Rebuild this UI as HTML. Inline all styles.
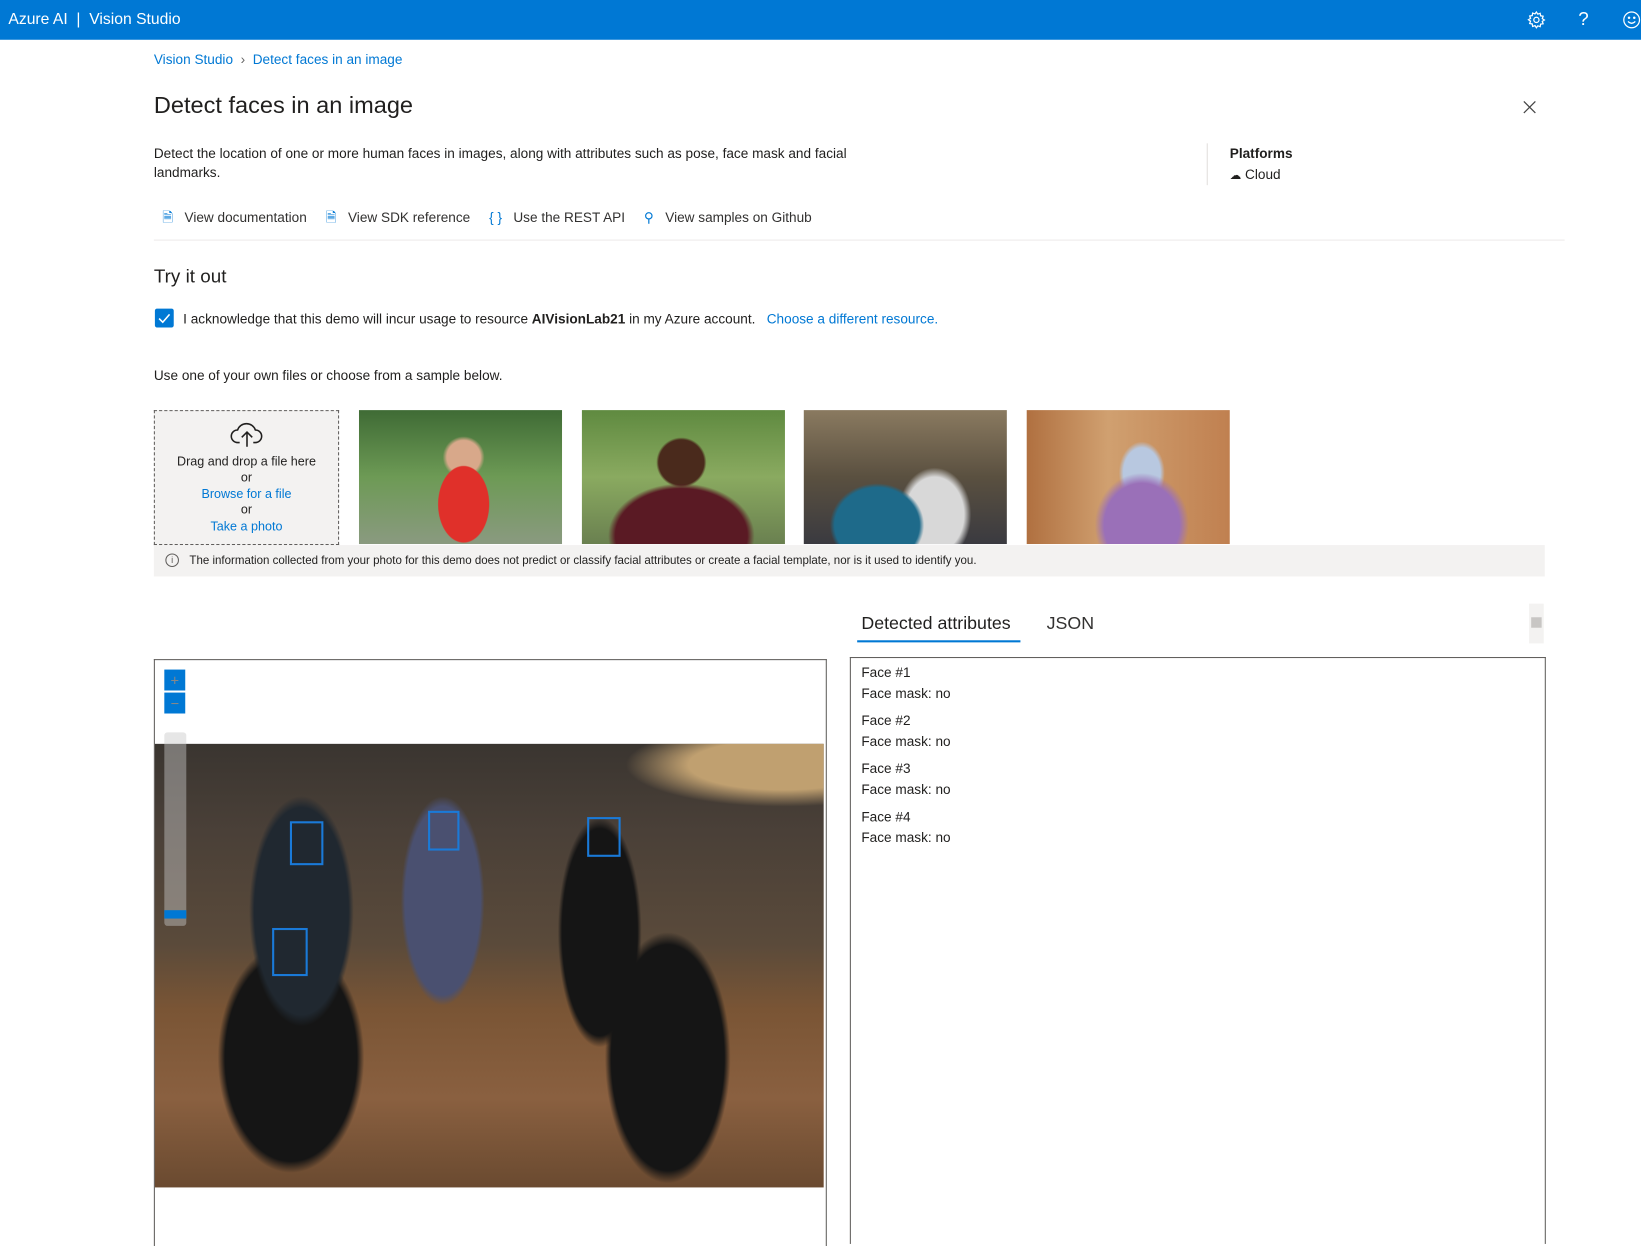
<!DOCTYPE html>
<html><head><meta charset="utf-8"><style>
html,body{margin:0;padding:0;background:#fff;overflow:hidden;width:1641px;height:1224px}
#w{position:absolute;left:0;top:0;width:1568px;height:1170px;transform:scale(1.0466,1.0462);transform-origin:0 0;font-family:"Liberation Sans",sans-serif;color:#323130}
.a{position:absolute;white-space:nowrap}
.s13{font-size:13px}
.blue{color:#0078d4}
.ph{position:absolute;top:392px;height:128px;width:194px}
</style></head><body><div id="w">
<div class="a" style="left:0;top:0;width:1568px;height:38px;background:#0078d4"></div>
<div class="a" style="left:8px;top:10px;color:#fff;font-size:15px">Azure AI &nbsp;|&nbsp; Vision Studio</div>
<svg class="a" style="left:1459px;top:10px" width="18" height="18" viewBox="0 0 18 18" fill="none" stroke="#fff" stroke-width="1.2"><circle cx="9" cy="9" r="2.5"/><path d="M9 1.5l1.3 2 2.3-.8.4 2.4 2.4.4-.8 2.3 2 1.3-2 1.3.8 2.3-2.4.4-.4 2.4-2.3-.8L9 16.5l-1.3-2-2.3.8-.4-2.4-2.4-.4.8-2.3-2-1.3 2-1.3-.8-2.3 2.4-.4.4-2.4 2.3.8z"/></svg>
<div class="a" style="left:1508px;top:8px;color:#fff;font-size:18px">?</div>
<svg class="a" style="left:1550px;top:10px" width="18" height="18" viewBox="0 0 18 18" fill="none" stroke="#fff" stroke-width="1.2"><circle cx="9" cy="9" r="7.5"/><path d="M5.5 10.5q3.5 3.5 7 0"/><circle cx="6.5" cy="7" r=".6" fill="#fff"/><circle cx="11.5" cy="7" r=".6" fill="#fff"/></svg>

<div class="a s13 blue" style="left:147px;top:49px">Vision Studio &nbsp;<span style="color:#666">›</span>&nbsp; Detect faces in an image</div>
<div class="a" style="left:147px;top:88px;font-size:22.5px;color:#201f1e">Detect faces in an image</div>
<svg class="a" style="left:1455px;top:96px" width="13" height="13"><path d="M1 1L12 12M12 1L1 12" stroke="#444" stroke-width="1.2"/></svg>
<div class="a s13" style="left:147px;top:138px;line-height:18px;color:#201f1e">Detect the location of one or more human faces in images, along with attributes such as pose, face mask and facial<br>landmarks.</div>
<div class="a" style="left:1153px;top:137px;width:1px;height:40px;background:#e1dfdd"></div>
<div class="a s13" style="left:1175px;top:139px;font-weight:bold;color:#201f1e">Platforms</div>
<div class="a s13" style="left:1175px;top:159px;color:#201f1e"><span style="font-size:11px">☁</span> Cloud</div>

<div class="a s13" style="left:155px;top:199px;color:#323130">
<span class="blue">🗎</span>&nbsp;&nbsp; View documentation &nbsp;&nbsp;&nbsp;&nbsp;<span class="blue">🗎</span>&nbsp;&nbsp; View SDK reference &nbsp;&nbsp;&nbsp;&nbsp;<span class="blue">{ }</span>&nbsp;&nbsp; Use the REST API &nbsp;&nbsp;&nbsp;&nbsp;<span class="blue">⚲</span>&nbsp;&nbsp; View samples on Github</div>
<div class="a" style="left:147px;top:229px;width:1348px;height:1px;background:#edebe9"></div>

<div class="a" style="left:147px;top:254px;font-size:18px;color:#201f1e">Try it out</div>
<div class="a" style="left:148px;top:295px;width:18px;height:18px;background:#0078d4;border-radius:2px"></div>
<svg class="a" style="left:150px;top:297px" width="14" height="14"><path d="M2 7.5L5.5 11 12 3.5" stroke="#fff" stroke-width="1.5" fill="none"/></svg>
<div class="a s13" style="left:175px;top:297px;color:#201f1e">I acknowledge that this demo will incur usage to resource <b>AIVisionLab21</b> in my Azure account. &nbsp;&nbsp;<span class="blue">Choose a different resource.</span></div>
<div class="a s13" style="left:147px;top:351px;color:#201f1e">Use one of your own files or choose from a sample below.</div>

<div class="a" style="left:147px;top:392px;width:175px;height:127px;border:1px dashed #605e5c;background:#f3f2f1;text-align:center;font-size:12px;line-height:15.5px;color:#201f1e">
<svg width="36" height="28" viewBox="0 0 36 28" style="margin-top:8px"><path d="M11 22h-2a6 6 0 0 1 0-12 9 9 0 0 1 17 0 6 6 0 0 1 0 12h-2M18 26V12M13 17l5-5 5 5" fill="none" stroke="#201f1e" stroke-width="1.5"/></svg><br>
Drag and drop a file here<br>or<br><span class="blue">Browse for a file</span><br>or<br><span class="blue">Take a photo</span></div>
<div class="ph" style="left:343px;background:radial-gradient(ellipse 40px 60px at 100px 90px,#e0302a 60%,transparent 62%),radial-gradient(circle 20px at 100px 45px,#d8a88a 80%,transparent),linear-gradient(#3f6b35,#6d9a55 50%,#8a9a80)"></div>
<div class="ph" style="left:556px;background:radial-gradient(ellipse 70px 50px at 95px 120px,#5a1a24 90%,transparent),radial-gradient(circle 24px at 95px 50px,#4a2a1c 90%,transparent),linear-gradient(#5f8a40,#8aaa60 50%,#6a8050)"></div>
<div class="ph" style="left:768px;background:radial-gradient(ellipse 45px 40px at 70px 110px,#1e6a8a 90%,transparent),radial-gradient(ellipse 35px 45px at 125px 100px,#d8d8d8 80%,transparent),linear-gradient(#8a7a60,#5a5040 50%,#3a3a40)"></div>
<div class="ph" style="left:981px;background:radial-gradient(ellipse 45px 50px at 110px 110px,#9a70b8 80%,transparent),radial-gradient(ellipse 22px 30px at 110px 60px,#b8c8e0 80%,transparent),linear-gradient(90deg,#b07040,#d0a070 40%,#c08050)"></div>

<div class="a" style="left:147px;top:521px;width:1329px;height:30px;background:#f3f2f1"></div>
<div class="a" style="left:158px;top:529px;width:11px;height:11px;border:1px solid #605e5c;border-radius:50%;font-size:9px;text-align:center;line-height:11px;color:#605e5c">i</div>
<div class="a" style="left:181px;top:530px;font-size:11px;color:#201f1e">The information collected from your photo for this demo does not predict or classify facial attributes or create a facial template, nor is it used to identify you.</div>

<div class="a" style="left:823px;top:586px;font-size:17px;color:#201f1e">Detected attributes</div>
<div class="a" style="left:819px;top:612px;width:156px;height:2px;background:#0078d4"></div>
<div class="a" style="left:1000px;top:586px;font-size:17px;color:#323130">JSON</div>
<div class="a" style="left:1461px;top:577px;width:14px;height:38px;background:#f3f2f1"></div>
<div class="a" style="left:1463px;top:590px;width:10px;height:10px;background:#c8c6c4"></div>

<div class="a" style="left:147px;top:630px;width:641px;height:560px;border:1px solid #605e5c;border-bottom:none"></div>
<div class="a" style="left:148px;top:711px;width:639px;height:424px;background:linear-gradient(#3a3530 0%,#4a4038 20%,#5a4a3a 45%,#7a5535 60%,#8a6040 80%,#6a4a30 100%)"></div>
<div class="a" style="left:148px;top:711px;width:639px;height:424px;background:radial-gradient(ellipse 50px 110px at 140px 160px,#202830 90%,transparent),radial-gradient(ellipse 40px 100px at 275px 150px,#4a5070 90%,transparent),radial-gradient(ellipse 40px 110px at 425px 180px,#151515 90%,transparent),radial-gradient(ellipse 70px 110px at 130px 300px,#151515 90%,transparent),radial-gradient(ellipse 60px 120px at 490px 300px,#151515 90%,transparent),radial-gradient(ellipse 150px 40px at 600px 20px,#c0a070 60%,transparent)"></div>
<div class="a" style="left:277px;top:785px;width:28px;height:38px;border:2px solid #1a7ad8"></div>
<div class="a" style="left:409px;top:775px;width:26px;height:34px;border:2px solid #1a7ad8"></div>
<div class="a" style="left:561px;top:781px;width:28px;height:34px;border:2px solid #1a7ad8"></div>
<div class="a" style="left:260px;top:887px;width:30px;height:42px;border:2px solid #1a7ad8"></div>
<div class="a" style="left:157px;top:640px;width:20px;height:20px;background:#0078d4;color:#888;font-size:14px;text-align:center;line-height:20px">+</div>
<div class="a" style="left:157px;top:662px;width:20px;height:20px;background:#0078d4;color:#888;font-size:14px;text-align:center;line-height:20px">−</div>
<div class="a" style="left:157px;top:700px;width:21px;height:185px;background:rgba(200,200,200,.45);border-radius:3px"></div>
<div class="a" style="left:157px;top:870px;width:21px;height:8px;background:#0078d4"></div>

<div class="a" style="left:812px;top:628px;width:663px;height:560px;border:1px solid #605e5c;border-bottom:none"></div>
<div class="a s13" style="left:823px;top:633px;line-height:20px;color:#201f1e">Face #1<br>Face mask: no</div>
<div class="a s13" style="left:823px;top:679px;line-height:20px;color:#201f1e">Face #2<br>Face mask: no</div>
<div class="a s13" style="left:823px;top:725px;line-height:20px;color:#201f1e">Face #3<br>Face mask: no</div>
<div class="a s13" style="left:823px;top:771px;line-height:20px;color:#201f1e">Face #4<br>Face mask: no</div>
</div></body></html>
